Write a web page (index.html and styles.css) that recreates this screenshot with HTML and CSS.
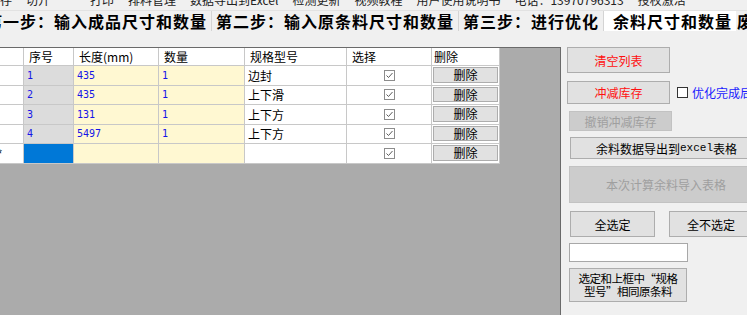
FILE: index.html
```html
<!DOCTYPE html>
<html lang="zh">
<head>
<meta charset="utf-8">
<title>余料尺寸和数量</title>
<link rel="stylesheet" href="styles.css">
</head>
<body>
<div class="app">
  <div class="menu">
    <div class="menu-inner">
      <span>存</span><span>切开</span><span>一</span><span>打印</span><span>排料管理</span><span>数据导出到Excel</span><span>检测更新</span><span>视频教程</span><span>用户使用说明书</span><span>电话：13970796313</span><span>授权激活</span>
    </div>
  </div>
  <div class="tabs">
    <div class="tab">第一步：输入成品尺寸和数量</div>
    <div class="tab">第二步：输入原条料尺寸和数量</div>
    <div class="tab">第三步：进行优化</div>
    <div class="tab active">余料尺寸和数量</div>
    <div class="tab last">废料统计</div>
  </div>
  <div class="content">
    <div class="grid-area">
      <div class="dgv">
        <div class="c rh hd"></div>
        <div class="c hd">序号</div>
        <div class="c hd">长度(mm)</div>
        <div class="c hd">数量</div>
        <div class="c hd">规格型号</div>
        <div class="c hd">选择</div>
        <div class="c hd hd-del">删除</div>

        <div class="c rh"></div>
        <div class="c seq num">1</div>
        <div class="c yel num">435</div>
        <div class="c yel num">1</div>
        <div class="c txt">边封</div>
        <div class="c chk"><svg width="11" height="11" viewBox="0 0 11 11"><rect x="0.5" y="0.5" width="10" height="10" fill="#fff" stroke="#8c8c8c"/><path d="M2.5 5.5 L4.5 7.5 L8.5 3" fill="none" stroke="#5a5a5a" stroke-width="1"/></svg></div>
        <div class="c del"><span class="dbtn">删除</span></div>

        <div class="c rh"></div>
        <div class="c seq num">2</div>
        <div class="c yel num">435</div>
        <div class="c yel num">1</div>
        <div class="c txt">上下滑</div>
        <div class="c chk"><svg width="11" height="11" viewBox="0 0 11 11"><rect x="0.5" y="0.5" width="10" height="10" fill="#fff" stroke="#8c8c8c"/><path d="M2.5 5.5 L4.5 7.5 L8.5 3" fill="none" stroke="#5a5a5a" stroke-width="1"/></svg></div>
        <div class="c del"><span class="dbtn">删除</span></div>

        <div class="c rh"></div>
        <div class="c seq num">3</div>
        <div class="c yel num">131</div>
        <div class="c yel num">1</div>
        <div class="c txt">上下方</div>
        <div class="c chk"><svg width="11" height="11" viewBox="0 0 11 11"><rect x="0.5" y="0.5" width="10" height="10" fill="#fff" stroke="#8c8c8c"/><path d="M2.5 5.5 L4.5 7.5 L8.5 3" fill="none" stroke="#5a5a5a" stroke-width="1"/></svg></div>
        <div class="c del"><span class="dbtn">删除</span></div>

        <div class="c rh"></div>
        <div class="c seq num">4</div>
        <div class="c yel num">5497</div>
        <div class="c yel num">1</div>
        <div class="c txt">上下方</div>
        <div class="c chk"><svg width="11" height="11" viewBox="0 0 11 11"><rect x="0.5" y="0.5" width="10" height="10" fill="#fff" stroke="#8c8c8c"/><path d="M2.5 5.5 L4.5 7.5 L8.5 3" fill="none" stroke="#5a5a5a" stroke-width="1"/></svg></div>
        <div class="c del"><span class="dbtn">删除</span></div>

        <div class="c rh star">*</div>
        <div class="c sel"></div>
        <div class="c yel"></div>
        <div class="c yel"></div>
        <div class="c txt"></div>
        <div class="c chk"><svg width="11" height="11" viewBox="0 0 11 11"><rect x="0.5" y="0.5" width="10" height="10" fill="#fff" stroke="#8c8c8c"/><path d="M2.5 5.5 L4.5 7.5 L8.5 3" fill="none" stroke="#5a5a5a" stroke-width="1"/></svg></div>
        <div class="c del"><span class="dbtn">删除</span></div>
      </div>
    </div>
    <div class="panel">
      <div class="btn red b-clear">清空列表</div>
      <div class="row r2">
        <div class="btn red b-sub">冲减库存</div>
        <span class="cbox"></span>
        <span class="blue-label">优化完成后自动冲减库存</span>
      </div>
      <div class="btn dis b-undo">撤销冲减库存</div>
      <div class="btn b-excel">余料数据导出到<span class="mono">excel</span>表格</div>
      <div class="btn dis b-import">本次计算余料导入表格</div>
      <div class="row r6">
        <div class="btn b-all">全选定</div>
        <div class="btn b-none">全不选定</div>
      </div>
      <div class="textbox"></div>
      <div class="btn b-same"><span class="same-text">选定和上框中“规格<br>型号”相同原条料</span></div>
    </div>
  </div>
</div>
</body>
</html>
```
FILE: styles.css
```css
* { box-sizing: border-box; }
html, body { margin: 0; padding: 0; }
body {
  width: 747px;
  height: 315px;
  overflow: hidden;
  background: #f0f0f0;
  font-family: "Noto Sans CJK SC", "Microsoft YaHei", sans-serif;
  font-size: 12px;
  color: #000;
}
.app { width: 747px; height: 315px; overflow: hidden; }

.menu {
  height: 10px;
  overflow: hidden;
  background: #f0f0f0;
}
.menu-inner {
  margin-top: -8px;
  white-space: nowrap;
  font-size: 12px;
  line-height: 16px;
  color: #222;
  display: flex;
  gap: 14px;
}

.tabs {
  display: flex;
  height: 21px;
  margin-left: -18px;
  white-space: nowrap;
  border-top: 1px solid #e2e2e2;
}
.tab {
  font-family: "Noto Sans CJK SC", serif;
  font-weight: 700;
  font-size: 16px;
  letter-spacing: 1px;
  line-height: 20px;
  padding: 0 4px;
  border-right: 1px solid #d4d4d4;
  background: #f0f0f0;
  color: #000;
}
.tab.active {
  background: #fff;
  padding: 0 4px 0 9px;
  border-right: none;
}
.tab.last { padding-left: 1px; }

.content {
  display: flex;
  height: 284px;
}
.grid-area {
  width: 561px;
  flex: none;
  margin-top: 16px;
  background: #ababab;
  border-top: 1px solid #6a6a6a;
  border-right: 1px solid #6a6a6a;
}
.dgv {
  display: grid;
  grid-template-columns: 24px 50px 85px 86px 102px 85px 68px;
  grid-template-rows: 18px repeat(5, 19.5px);
  width: 500px;
}
.c {
  border-right: 1px solid #c8c8c8;
  border-bottom: 1px solid #c8c8c8;
  background: #fff;
  display: flex;
  align-items: center;
  padding-left: 3px;
  white-space: nowrap;
  overflow: hidden;
}
.hd { padding-left: 5px; line-height: 16px; }
.hd-del { padding-left: 2px; }
.rh { padding-left: 0; }
.star { font-family: "Liberation Sans", sans-serif; font-size: 13px; padding-left: 0; text-indent: -3px; }
.seq { background: #dcdcdc; }
.yel { background: #fff8d2; }
.sel { background: #0078d7; }
.num {
  color: #1515e8;
  font-family: "DejaVu Sans Mono", "Liberation Mono", monospace;
  font-size: 10px;
}
.txt { color: #000; }
.chk { justify-content: center; padding-left: 0; }
.chk svg { display: block; }
.del { padding: 1px 1px 2px 1px; }
.dbtn {
  display: flex;
  align-items: center;
  justify-content: center;
  width: 100%;
  height: 100%;
  background: #e1e1e1;
  border: 1px solid #adadad;
  font-size: 12px;
}

.panel {
  flex: none;
  width: 186px;
  padding-top: 16px;
}
.btn {
  display: flex;
  align-items: center;
  justify-content: center;
  background: #e1e1e1;
  border: 1px solid #adadad;
  font-size: 12px;
  white-space: nowrap;
  color: #000;
}
.btn.red { color: #ff1010; }
.btn.dis { background: #cccccc; border-color: #c2c2c2; color: #9f9f9f; }
.mono { font-family: "Liberation Mono", monospace; font-size: 11px; }
.row { display: flex; align-items: center; }

.b-clear { margin-left: 6px; width: 103px; height: 26px; }
.r2 { margin-top: 8px; }
.b-sub { margin-left: 6px; width: 103px; height: 23px; flex: none; }
.cbox {
  flex: none;
  width: 11px;
  height: 11px;
  margin-left: 7px;
  border: 1px solid #333;
  background: #fff;
}
.blue-label { margin-left: 4px; color: #1a1aff; white-space: nowrap; }
.b-undo { margin-top: 7px; margin-left: 8px; width: 103px; height: 20px; }
.b-excel { margin-top: 6px; margin-left: 9px; width: 193px; height: 22px; }
.b-import { margin-top: 7px; margin-left: 8px; width: 194px; height: 37px; }
.r6 { margin-top: 8px; }
.b-all { margin-left: 9px; width: 85px; height: 26px; flex: none; }
.b-none { margin-left: 14px; width: 84px; height: 26px; flex: none; }
.textbox {
  margin-top: 6px;
  margin-left: 8px;
  width: 119px;
  height: 19px;
  background: #fff;
  border: 1px solid #a8a8a8;
}
.b-same {
  margin-top: 6px;
  margin-left: 8px;
  width: 118px;
  height: 34px;
}
.same-text {
  display: block;
  line-height: 13px;
  font-size: 11.5px;
  text-align: center;
  letter-spacing: -0.5px;
  white-space: nowrap;
}
```
